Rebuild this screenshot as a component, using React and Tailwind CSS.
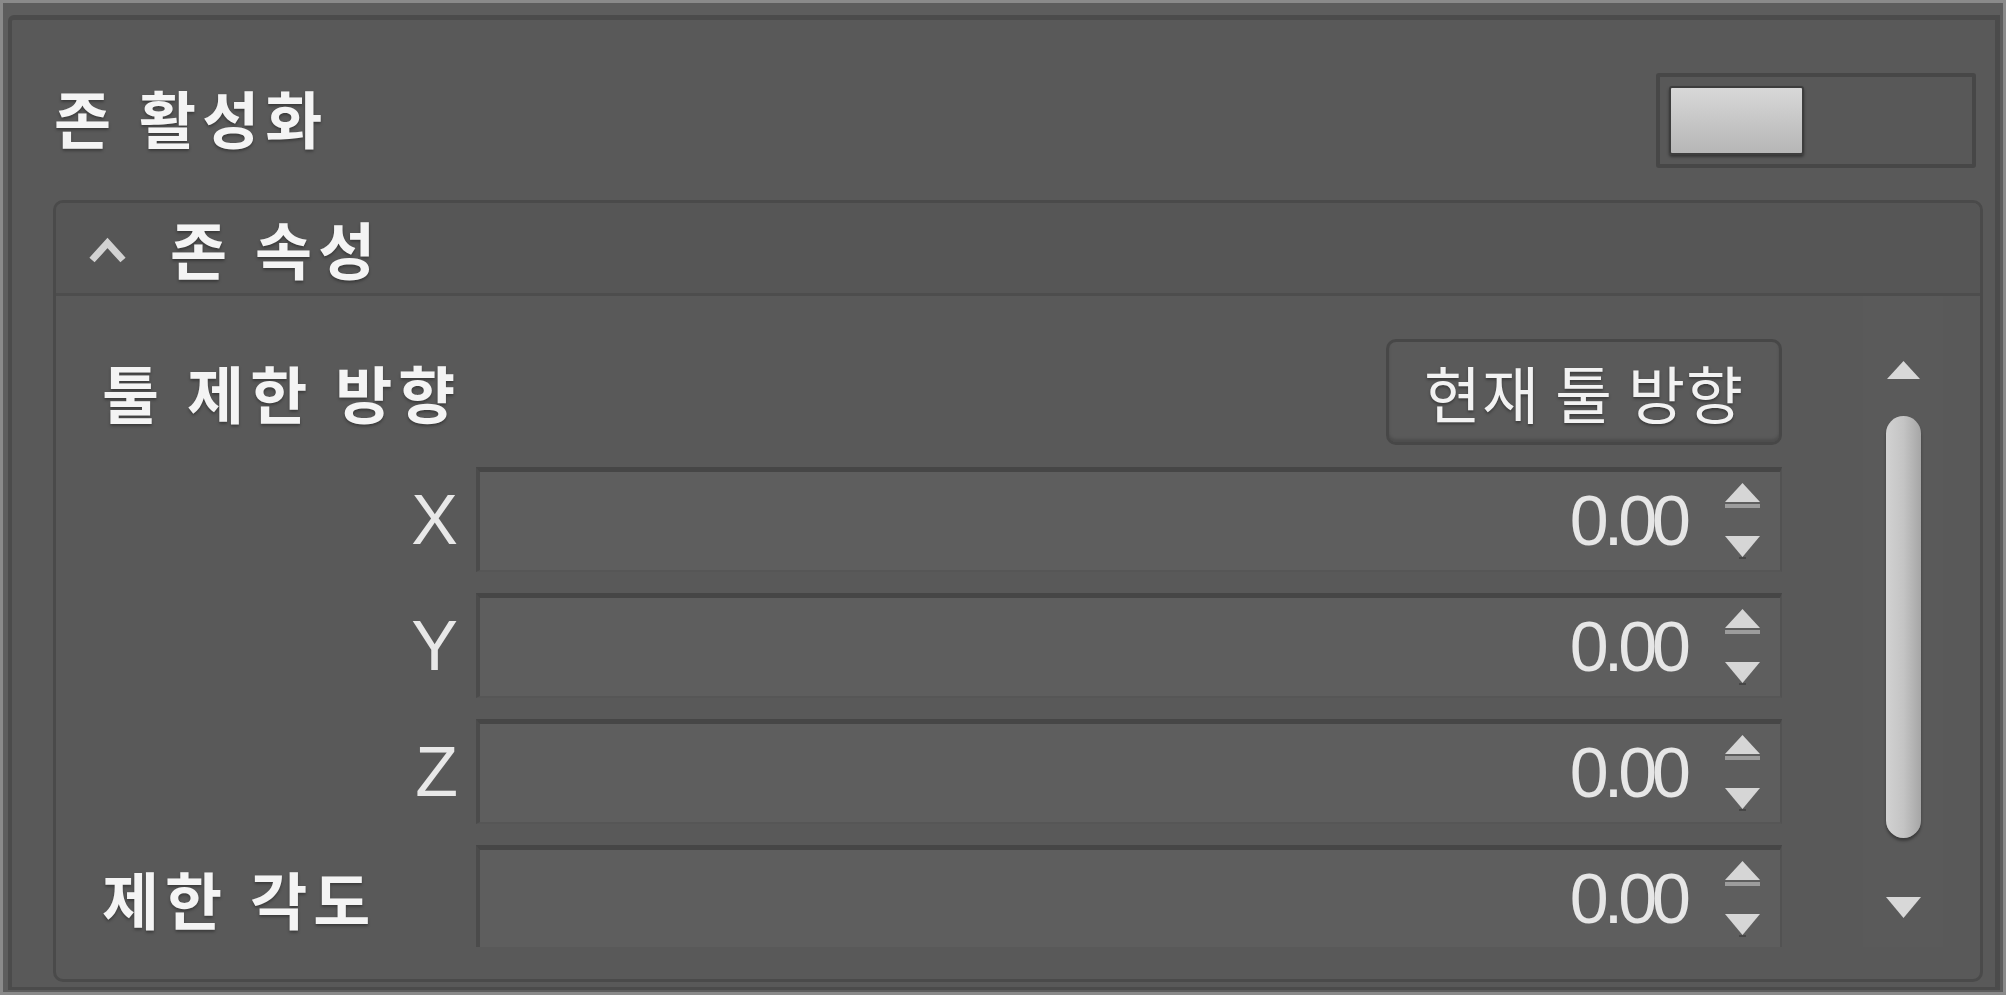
import React from 'react';

const kr = { fontFamily: '"Noto Sans CJK KR", "Noto Sans", sans-serif' };
const latin = { fontFamily: '"Liberation Sans", Arial, sans-serif' };

const labelCls =
  'text-[62px] leading-none font-bold text-[#f4f4f4] tracking-[6px] [word-spacing:2px] [text-shadow:0_2px_3px_rgba(0,0,0,0.35)]';

function Spinner() {
  return (
    <svg width="35" height="76" viewBox="0 0 35 76" className="shrink-0">
      <polygon points="17.5,0 35,19 0,19" fill="#d6d6d6" />
      <rect x="0" y="21" width="35" height="4" fill="#9c9c9c" />
      <polygon points="0,53 35,53 17.5,74" fill="#d6d6d6" />
      <rect x="14" y="74" width="7" height="2" fill="#474747" />
    </svg>
  );
}

function NumberField({ value }) {
  return (
    <div className="h-[105px] flex items-center justify-end bg-[#5e5e5e] border-t-[5px] border-l-[4px] border-r-[2px] border-b-[2px] border-t-[#464646] border-l-[#4b4b4b] border-r-[#525252] border-b-[#565656] pr-[20px]">
      <span
        className="text-[70px] leading-none text-[#e6e6e6] tracking-[-5px] mr-[39px]"
        style={latin}
      >
        {value}
      </span>
      <Spinner />
    </div>
  );
}

const rows = [
  { label: 'X', axis: true },
  { label: 'Y', axis: true },
  { label: 'Z', axis: true },
  { label: '제한 각도', axis: false },
];

export default function App() {
  return (
    <div className="w-[2006px] h-[995px] overflow-hidden bg-[#5d5d5d] border-[3px] border-[#8a8a8a] pt-[12px] pl-[5px] pr-[3px] pb-[2px] flex">
      <div className="flex-1 flex flex-col bg-[#595959] border-t-[5px] border-l-[4px] border-r-[5px] border-b-[3px] border-[#4b4b4b] rounded-tl-[6px] overflow-hidden">
        {/* Zone activation row */}
        <div className="mt-[53px] mb-[32px] h-[95px] pl-[42px] pr-[19px] flex items-center justify-between">
          <span className={`${labelCls} mb-[8px]`} style={kr}>
            존 활성화
          </span>
          <div className="w-[320px] h-[95px] border-[4px] border-[#474747] rounded-[3px] bg-[#585858] p-[9px] flex">
            <div className="w-[135px] h-full rounded-[3px] border-[2px] border-[#3d3d3d] bg-gradient-to-b from-[#d8d8d8] to-[#b6b6b6] shadow-[0_2px_3px_rgba(0,0,0,0.4)]" />
          </div>
        </div>

        {/* Zone properties group */}
        <div className="ml-[41px] mr-[12px] h-[782px] border-[3px] border-[#4a4a4a] rounded-[10px] flex flex-col overflow-hidden">
          <div className="h-[93px] shrink-0 bg-[#565656] border-b-[3px] border-[#4d4d4d] flex items-center pl-[32px]">
            <svg width="39" height="28" viewBox="0 0 39 28" className="mt-[6px]">
              <polyline points="4,23 19.5,6 35,23" fill="none" stroke="#d2d2d2" strokeWidth="7" />
            </svg>
            <span className={`ml-[43px] ${labelCls}`} style={kr}>
              존 속성
            </span>
          </div>

          <div className="flex pl-[46px]">
            <div className="w-[1680px] h-[651px] overflow-hidden pt-[43px] flex flex-col">
              <div className="h-[106px] shrink-0 flex items-center justify-between">
                <span className={labelCls} style={kr}>
                  툴 제한 방향
                </span>
                <button
                  className="w-[396px] h-full rounded-[10px] border-[3px] border-[#474747] bg-[#5a5a5a] shadow-[inset_0_-3px_3px_rgba(0,0,0,0.15)] text-[62px] leading-none tracking-[1px] text-[#f2f2f2] [text-shadow:0_2px_3px_rgba(0,0,0,0.35)] flex items-center justify-center"
                  style={kr}
                >
                  현재 툴 방향
                </button>
              </div>

              <div className="mt-[22px] grid grid-cols-[356px_1fr] gap-x-[18px] gap-y-[21px] shrink-0">
                {rows.map((row) => (
                  <React.Fragment key={row.label}>
                    <div className={`flex items-center ${row.axis ? 'justify-end' : 'justify-start'}`}>
                      {row.axis ? (
                        <span className="text-[70px] leading-none text-[#e8e8e8]" style={latin}>
                          {row.label}
                        </span>
                      ) : (
                        <span className={labelCls} style={kr}>
                          {row.label}
                        </span>
                      )}
                    </div>
                    <NumberField value="0.00" />
                  </React.Fragment>
                ))}
              </div>
            </div>

            {/* Scrollbar */}
            <div className="ml-[81px] w-[80px] h-[651px] flex flex-col items-center pt-[65px] bg-[#5a5a5a]">
              <svg width="33" height="18" viewBox="0 0 33 18">
                <polygon points="16.5,0 33,18 0,18" fill="#d8d8d8" />
              </svg>
              <div className="mt-[37px] w-[35px] h-[422px] rounded-full bg-gradient-to-r from-[#d2d2d2] via-[#c4c4c4] to-[#a6a6a6] shadow-[0_3px_3px_rgba(0,0,0,0.35)]" />
              <svg width="35" height="21" viewBox="0 0 35 21" className="mt-[59px]">
                <polygon points="0,0 35,0 17.5,21" fill="#d8d8d8" />
              </svg>
            </div>
          </div>
        </div>
      </div>
    </div>
  );
}
